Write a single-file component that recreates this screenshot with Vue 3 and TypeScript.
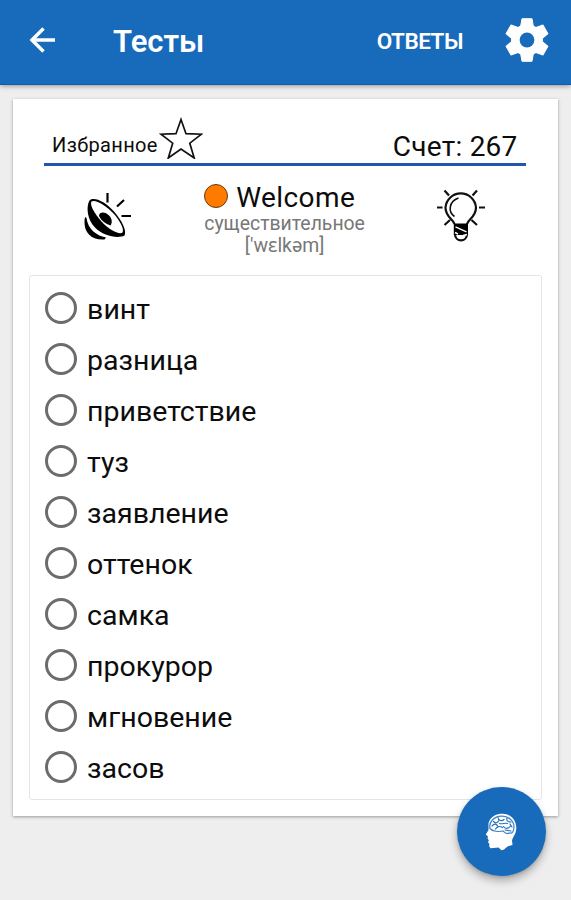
<script setup lang="ts">
import { ref } from 'vue'

const options: string[] = [
  'винт',
  'разница',
  'приветствие',
  'туз',
  'заявление',
  'оттенок',
  'самка',
  'прокурор',
  'мгновение',
  'засов',
]
const selected = ref<string | null>(null)
const score = ref(267)
const teeth = [0, 60, 120, 180, 240, 300]
</script>

<template>
  <div class="screen">
    <header class="bar">
      <button class="back" aria-label="Назад">
        <svg width="28" height="28" viewBox="0 0 28 28">
          <path d="M26 14H3M14.500 2.500L3 14l11.500 11.500" fill="none" stroke="#fff" stroke-width="3.500" />
        </svg>
      </button>
      <h1 class="title">Тесты</h1>
      <button class="answers">ОТВЕТЫ</button>
      <button class="gear" aria-label="Настройки">
        <svg width="44" height="44" viewBox="-22 -22 44 44">
          <g fill="#fff" stroke="#fff" stroke-width="1" stroke-linejoin="round">
            <circle r="15" />
            <path v-for="angle in teeth" :key="angle" d="M-5 -21.300H5L6.300 -14L9 -12H-9L-6.300 -14Z" :transform="`rotate(${angle})`" />
          </g>
          <circle r="7.400" fill="#186abb" />
        </svg>
      </button>
    </header>

    <main class="card">
      <div class="summary">
        <span class="favorite">Избранное</span>
        <svg class="star" width="44" height="42" viewBox="0 0 44 42">
          <path
            d="M22 2.500L27 16.700L42.500 17.200L30.800 26.200L35.200 41L22 32L9.300 41L13.700 26.200L2 17.200L17 16.700Z"
            fill="#fff"
            stroke="#111"
            stroke-width="1.700"
          />
        </svg>
        <span class="score">Счет: {{ score }}</span>
      </div>

      <section class="word">
        <button class="speaker" aria-label="Прослушать">
          <svg width="50" height="50" viewBox="0 0 50 50">
            <path d="M1 24C-1.500 37 5 47.500 20.500 46.500L22 44.500C12 42.500 4 36 2.500 25Z" fill="#000" />
            <path
              d="M5.500 7.500C10 3.500 21 8.500 30 18.500C38 27.500 43 38 40.500 42.500C34 46 19 43 11 34.500C3 26.500 2 13.500 5.500 7.500Z"
              fill="#000"
            />
            <path
              d="M7.500 8.500C11 6 21 11.500 29 20C36 27.500 40.500 36.500 38.500 39.500C35.500 42 25 37 17.500 28.500C10 20 5.500 11.500 7.500 8.500Z"
              fill="#fff"
            />
            <path d="M15 23C15 18.500 21.500 18.500 25 22.500C28.500 26 28.300 30 26.500 32.500C21.500 31 17.500 28 15 23Z" fill="#000" />
            <path d="M23.500 0v9.500M33 13.500L40 7M37.500 23H47" fill="none" stroke="#000" stroke-width="2.200" />
          </svg>
        </button>

        <div class="entry">
          <div class="headword"><i class="dot"></i><span>Welcome</span></div>
          <div class="part">существительное</div>
          <div class="ipa">['wɛlkəm]</div>
        </div>

        <button class="bulb" aria-label="Подсказка">
          <svg width="50" height="54" viewBox="0 0 50 54">
            <g fill="none" stroke="#111" stroke-width="2.200">
              <path d="M18.500 35C17.500 30.500 9.500 28 9.500 18.500A15.300 15.300 0 0 1 40 18.500C40 28 32 30.500 31 35" />
              <path d="M22.500 9C12.500 12.500 12 23 18.500 27.500" stroke-width="1.600" />
              <path d="M1 18.500h5.500M43 18.500h6M8.500 1.500l4.500 5M41 1.500l-4.500 5M8.500 36l5.500-5M41 36l-5.500-5" />
              <path d="M19 45C19 53.500 31 53.500 31 45" fill="#fff" />
            </g>
            <path d="M17.800 34.500H32V46H17.800Z" fill="#000" />
            <path d="M19.500 37.800L30.500 42.800M19 43.500L22 45M27 46.500L31 45.500" stroke="#fff" stroke-width="1.400" />
          </svg>
        </button>
      </section>

      <section class="options">
        <label v-for="option in options" :key="option" class="option">
          <input v-model="selected" type="radio" name="answer" :value="option" />
          <span>{{ option }}</span>
        </label>
      </section>
    </main>

    <button class="fab" aria-label="Тренировка">
      <svg width="34" height="38" viewBox="0 0 34 38">
        <path
          d="M3.500 10C6 3 11.500.8 17.500 .8C26 .8 31.300 7.500 31.300 15C31.300 21 28 23.500 27 27.500L27.500 32L22.500 33.500L19 36.500L16.500 37.300L13.500 34.500L5.500 35.300L4.300 33.500V30.500L3 29.500L3.800 27.500L2.500 25L3 23.500L.8 21.500L3.500 17Z"
          fill="#fff"
        />
        <g fill="none" stroke="#3f83c6" stroke-width="1.200" stroke-linecap="round">
          <path d="M5 15.500C3.500 9 9 3.500 16.500 3.200C23.500 2.800 29 8 29 14C29 18.500 27 21 24 20C21.500 22 19.500 19.500 18 18C13.500 19 7.500 18.500 5 15.500Z" />
          <path stroke="#2873bd" d="M8.500 8.500c2 2 4 1.500 5-.5M13 4.500c0 3 4 4 6 2M7 13c2-3 5-2 5.500 0M10.500 16c1.500-3 5-3 7-1.500M14.500 10.500c3 1 5-1 8 0M22 5c-1 3 1.500 4 4 4M18.500 13.500c2 3 5 2 7-.5M20 17l6 1M25 11l2 3" />
        </g>
      </svg>
    </button>
  </div>
</template>

<style>
body {
  margin: 0;
  background: #eeeeee;
}
</style>

<style scoped>
.screen {
  position: relative;
  box-sizing: border-box;
  width: 571px;
  height: 900px;
  overflow: hidden;
  background: #eeeeee;
  font-family: Roboto, "Noto Sans", sans-serif;
  color: #0c0c0c;
}

button {
  display: block;
  border: 0;
  padding: 0;
  background: none;
  font: inherit;
  color: inherit;
}

svg {
  display: block;
}

.bar {
  display: flex;
  align-items: center;
  box-sizing: border-box;
  height: 85px;
  padding: 0 22px 4px 29px;
  background: #186abb;
  border-bottom: 1px solid #0e5bb0;
  box-shadow: 0 1px 5px rgba(0, 0, 0, 0.38);
  color: #fff;
}

.title {
  margin: 3px 0 0 56px;
  font-size: 31px;
  font-weight: 600;
  line-height: 40px;
  letter-spacing: 0;
}

.answers {
  margin-top: 2px;
  margin-left: auto;
  margin-right: 42px;
  font-size: 22.500px;
  font-weight: 600;
  line-height: 30px;
  letter-spacing: -0.5px;
}

.card {
  box-sizing: border-box;
  width: 545px;
  height: 717px;
  margin: 14px 0 0 12.600px;
  padding: 18px 16px 17px;
  background: #fff;
  box-shadow: 0 1px 3px rgba(0, 0, 0, 0.36);
}

.summary {
  display: flex;
  align-items: flex-start;
  box-sizing: border-box;
  height: 49px;
  margin: 0 16px 0 15.500px;
  padding-left: 8px;
  border-bottom: 3px solid #2156ad;
}

.favorite {
  margin-top: 15px;
  font-size: 20px;
  line-height: 26px;
  letter-spacing: 0.35px;
}

.star {
  margin-left: 1px;
}

.score {
  margin: 12px 8px 0 auto;
  font-size: 28px;
  line-height: 36px;
  letter-spacing: 0.25px;
}

.word {
  display: flex;
  justify-content: space-between;
  height: 109px;
  padding: 0 56px 0 55px;
}

.speaker,
.bulb {
  align-self: flex-start;
}

.speaker {
  margin-top: 27px;
}

.bulb {
  margin-top: 23px;
}

.entry {
  display: flex;
  flex-direction: column;
  align-items: center;
  padding-top: 13px;
}

.headword {
  display: flex;
  align-items: center;
  align-self: flex-start;
  gap: 8px;
  height: 34px;
  font-size: 28px;
  line-height: 33px;
  letter-spacing: 0.4px;
}

.headword span {
  margin-top: 2px;
}

.dot {
  box-sizing: border-box;
  width: 24px;
  height: 24px;
  border: 1px solid #6b3a10;
  border-radius: 50%;
  background: #ff7b00;
}

.part,
.ipa {
  font-size: 19.400px;
  line-height: 21.500px;
  color: #777;
}

.options {
  display: grid;
  grid-template-rows: repeat(10, 51.050px);
  box-sizing: border-box;
  height: 525px;
  padding: 6px 15px;
  border: 1.500px solid #e4e4e4;
  border-radius: 3px;
}

.option {
  display: flex;
  align-items: center;
  gap: 10.500px;
  font-size: 28.500px;
  line-height: 36px;
}

.option input {
  appearance: none;
  box-sizing: border-box;
  width: 32px;
  height: 32px;
  margin: 0;
  border: 3px solid #6c6c6c;
  border-radius: 50%;
}

.option input:checked {
  border-color: #186abb;
  background: radial-gradient(#186abb 50%, transparent 55%);
}

.option span {
  margin-top: 5px;
}

.fab {
  position: absolute;
  left: 457px;
  top: 787px;
  display: flex;
  align-items: center;
  justify-content: center;
  width: 89px;
  height: 89px;
  border-radius: 50%;
  background: #186abb;
  box-shadow: 0 5px 9px rgba(0, 0, 0, 0.28), 0 1px 3px rgba(0, 0, 0, 0.15);
}
</style>
